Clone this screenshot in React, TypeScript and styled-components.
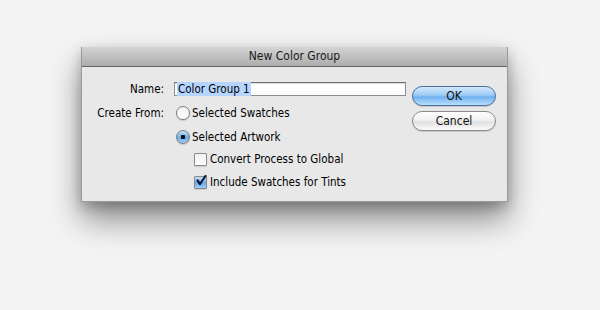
import styled, { createGlobalStyle } from 'styled-components'

const GlobalStyle = createGlobalStyle`
  html, body {
    margin: 0;
    padding: 0;
    background: #f4f4f4;
  }
  body {
    font-family: 'DejaVu Sans Condensed', 'DejaVu Sans', sans-serif;
    font-size: 11.5px;
    color: #000;
  }
`

const App = () => {
  return (
    <Page>
      <GlobalStyle />
      <Dialog>
        <TitleBar>New Color Group</TitleBar>
        <Body>
          <Form>
            <Label>Name:</Label>
            <TextField>
              <Selected>Color Group 1</Selected>
            </TextField>
            <Label>Create From:</Label>
            <Option>
              <Radio />
              Selected Swatches
            </Option>
            <span />
            <Option>
              <Radio checked />
              Selected Artwork
            </Option>
            <span />
            <SubOption>
              <Checkbox />
              Convert Process to Global
            </SubOption>
            <span />
            <SubOption>
              <Checkbox checked>
                <svg width="12" height="12" viewBox="0 0 12 12">
                  <path d="M2.5 5.5 L5 9 L10.5 1" fill="none" stroke="#0b1a3a" strokeWidth="2.2" strokeLinecap="round" strokeLinejoin="round" />
                </svg>
              </Checkbox>
              Include Swatches for Tints
            </SubOption>
          </Form>
          <Buttons>
            <Button primary>OK</Button>
            <Button>Cancel</Button>
          </Buttons>
        </Body>
      </Dialog>
    </Page>
  )
}

export default App

const Page = styled.div`
  width: 600px;
  height: 310px;
  padding: 47px 0 0 81px;
  box-sizing: border-box;
`

const Dialog = styled.div`
  width: 427px;
  height: 155px;
  background: #e8e8e8;
  border: 1px solid #9a9a9a;
  border-top: none;
  box-sizing: border-box;
  box-shadow: 0 18px 30px rgba(0, 0, 0, 0.42), 0 5px 12px rgba(0, 0, 0, 0.22);
  display: flex;
  flex-direction: column;
`

const TitleBar = styled.div`
  height: 19px;
  line-height: 19px;
  text-align: center;
  background: linear-gradient(#d4d4d4, #adadad);
  border-bottom: 1px solid #636363;
  font-size: 12px;
  color: #1a1a1a;
`

const Body = styled.div`
  flex: 1;
  display: flex;
  justify-content: space-between;
  padding: 15px 11px 0 13px;
`

const Form = styled.div`
  display: grid;
  grid-template-columns: 69px 232px;
  grid-template-rows: 14px 27px 24px 22px 23px;
  column-gap: 10px;
  align-items: end;
`

const Label = styled.span`
  text-align: right;
  white-space: nowrap;
  line-height: 20px;
  &:first-child {
    line-height: 14px;
  }
`

const TextField = styled.div`
  height: 12px;
  border: 1px solid #8e8e8e;
  border-top-color: #6e6e6e;
  background: #fff;
  padding: 0 2px;
  line-height: 12px;
  box-shadow: inset 0 1px 1px rgba(0, 0, 0, 0.15);
`

const Selected = styled.span`
  background: #b5d5ff;
  padding: 0 1px;
`

const Option = styled.div`
  display: flex;
  align-items: center;
  height: 20px;
  gap: 2px;
  margin-left: 2px;
  white-space: nowrap;
`

const SubOption = styled(Option)`
  margin-left: 20px;
  gap: 3px;
`

const Radio = styled.span<{ checked?: boolean }>`
  width: 12px;
  height: 12px;
  border-radius: 50%;
  border: 1px solid #7c7c7c;
  background: ${p =>
    p.checked
      ? 'radial-gradient(circle at 50% 50%, #111 0 2px, transparent 2.5px), linear-gradient(#c6e2fb, #6aa9e9 55%, #9fd0fa)'
      : 'linear-gradient(#f2f2f2, #ffffff)'};
  box-shadow: 0 1px 1px rgba(0, 0, 0, 0.15);
`

const Checkbox = styled.span<{ checked?: boolean }>`
  width: 11px;
  height: 11px;
  border: 1px solid #8a8a8a;
  border-radius: 1px;
  position: relative;
  background: ${p =>
    p.checked
      ? 'linear-gradient(#c6e2fb, #6aa9e9 55%, #9fd0fa)'
      : 'linear-gradient(#f0f0f0, #ffffff)'};
  box-shadow: 0 1px 1px rgba(0, 0, 0, 0.12);
  svg {
    position: absolute;
    left: 0;
    top: -2px;
  }
`

const Buttons = styled.div`
  display: flex;
  flex-direction: column;
  gap: 5px;
  padding-top: 4px;
`

const Button = styled.button<{ primary?: boolean }>`
  width: 84px;
  height: 20px;
  border-radius: 10px;
  font-family: inherit;
  font-size: 12px;
  color: #111;
  padding: 0;
  border: 1px solid ${p => (p.primary ? '#4c6f9e' : '#8a8a8a')};
  background: ${p =>
    p.primary
      ? 'linear-gradient(#d3e8fc, #9ccbf4 45%, #6fb0ee 55%, #b8e0ff)'
      : 'linear-gradient(#ffffff, #f1f1f1 45%, #e0e0e0 55%, #fbfbfb)'};
  box-shadow: 0 1px 1px rgba(0, 0, 0, 0.15);
`
